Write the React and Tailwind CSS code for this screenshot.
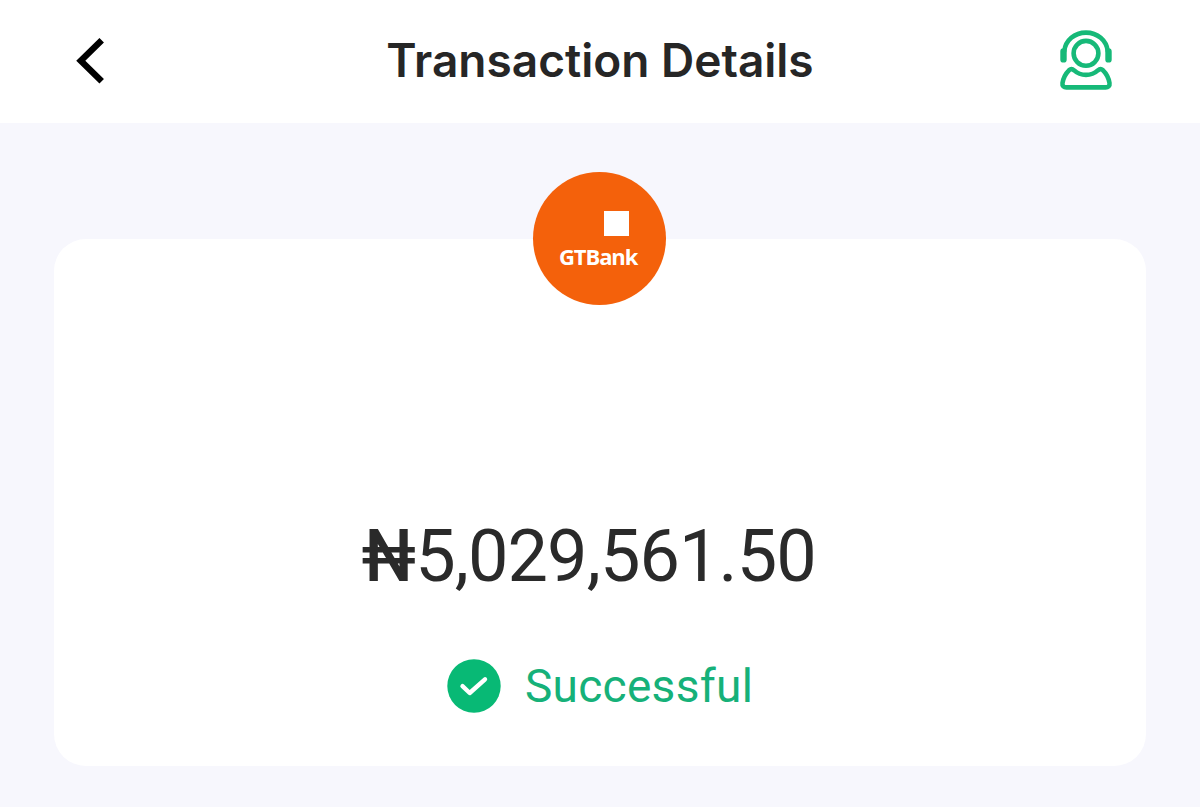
"use client";

const BackIcon = () => (
  <svg className="w-9 h-[50px]" viewBox="0 0 36 50" fill="none">
    <path d="M29.7 4.3L8.8 24.8L29.7 45.3" stroke="#000" strokeWidth="6.4" />
  </svg>
);

const SupportIcon = () => (
  <svg
    className="w-[60px] h-[70px]"
    viewBox="0 0 60 70"
    fill="none"
    stroke="#16b978"
    strokeWidth="4.6"
    strokeLinecap="round"
    strokeLinejoin="round"
  >
    {/* Headset */}
    <path d="M8.3 25C9.5 14.5 18.5 6.6 30 6.6C41.5 6.6 50.5 14.5 51.7 25" />
    <path d="M7.5 25.4V33.4M52.5 25.4V33.4" strokeWidth="6.4" />
    {/* Head and shoulders */}
    <circle cx="30" cy="27.3" r="12.4" />
    <path d="M13.2 44.1C14.8 42.7 16.6 43 18.2 44.4C24.6 50.4 35.4 50.4 41.8 44.4C43.4 43 45.2 42.7 46.8 44.1C50.2 47.4 52.7 52 53.5 57C54 60.1 52 61.4 49.6 61.4H10.4C8 61.4 6 60.1 6.5 57C7.3 52 9.8 47.4 13.2 44.1Z" />
  </svg>
);

const SuccessIcon = () => (
  <svg className="w-[54px] h-[54px]" viewBox="0 0 54 54" fill="none">
    <circle cx="27" cy="27" r="26.7" fill="#08b975" />
    <path
      d="M15.5 27.2L22.7 34L38 20.3"
      stroke="#fff"
      strokeWidth="4.4"
      strokeLinecap="round"
      strokeLinejoin="round"
    />
  </svg>
);

export default function TransactionDetails() {
  return (
    <div className="w-[1200px] h-[807px] overflow-hidden bg-[#f7f7fd] font-['Roboto',sans-serif]">
      {/* Header */}
      <header className="flex items-center justify-between h-[123px] pb-[2px] pl-[72px] pr-[84px] bg-white">
        <button type="button" aria-label="Back" className="w-[72px]">
          <BackIcon />
        </button>
        <h1 className="pb-[2px] font-['Inter',sans-serif] text-[46px] leading-none font-semibold text-[#262626] whitespace-nowrap">
          Transaction Details
        </h1>
        <button type="button" aria-label="Support">
          <SupportIcon />
        </button>
      </header>

      {/* Transaction card */}
      <main className="px-[54px] pt-[116px]">
        <section className="relative flex flex-col items-center h-[527px] rounded-[32px] bg-white">
          <div className="absolute left-[479px] -top-[67px] w-[133px] h-[133px] rounded-full bg-[#f4610b]">
            <div className="w-[25px] h-[25px] mt-[39px] ml-[71px] bg-white" />
            <p className="mt-[8px] ml-[26px] font-['Open_Sans',sans-serif] text-[22px] leading-[24px] font-bold tracking-[-1.1px] text-white">
              GTBank
            </p>
          </div>

          <p className="mt-[282px] mr-[26px] text-[72px] leading-[72px] tracking-[-0.9px] text-[#2a2a2a] whitespace-nowrap">
            <span className="inline-block origin-right scale-x-[0.94] font-medium">₦</span>
            5,029,561.50
          </p>

          <div className="flex items-center gap-6 mt-[66px]">
            <SuccessIcon />
            <span className="text-[46px] leading-[54px] tracking-[0.3px] text-[#16b179]">
              Successful
            </span>
          </div>
        </section>
      </main>
    </div>
  );
}
